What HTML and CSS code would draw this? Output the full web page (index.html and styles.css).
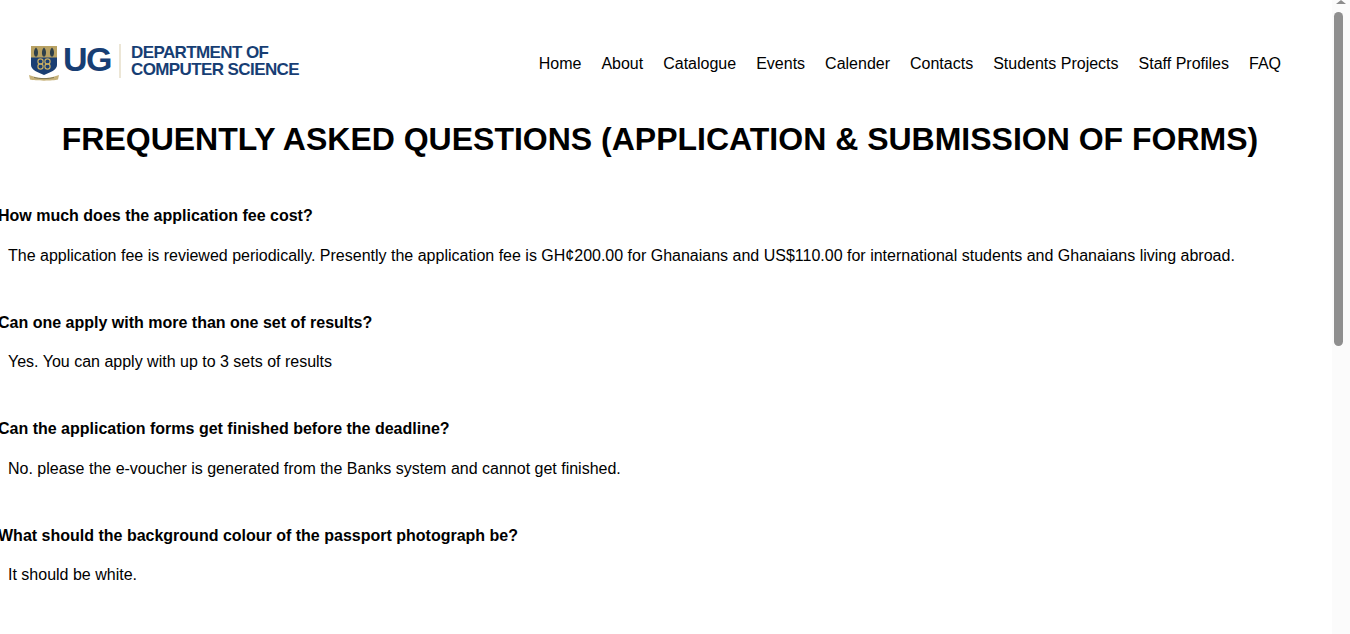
FILE: index.html
```html
<!DOCTYPE html>
<html lang="en">
<head>
    <meta charset="UTF-8">
    <meta name="viewport" content="width=device-width, initial-scale=1.0">
    <title>FAQ - Department of Computer Science</title>
    <link rel="stylesheet" href="styles.css">
</head>
<body>
    <div class="page">
        <header class="site-header">
            <a class="logo" href="#">
                <svg class="crest" width="30" height="36" viewBox="0 0 30 36" aria-hidden="true">
                    <path d="M2 1H28V20C28 25 21 27.500 15 30C9 27.500 2 25 2 20Z" fill="#1b3f73"/>
                    <path d="M2 1H28V12.500H2Z" fill="#b9a263"/>
                    <path d="M7 2.500C9.500 5 9.500 9 8 11.500H6C4.500 9 4.500 5 7 2.500ZM15 2.500C17.500 5 17.500 9 16 11.500H14C12.500 9 12.500 5 15 2.500ZM23 2.500C25.500 5 25.500 9 24 11.500H22C20.500 9 20.500 5 23 2.500Z" fill="#2d3f4a"/>
                    <g fill="none" stroke="#c9ae62" stroke-width="1.200">
                        <circle cx="11.500" cy="16.500" r="2.600"/>
                        <circle cx="18.500" cy="16.500" r="2.600"/>
                        <circle cx="11.500" cy="21.500" r="2.600"/>
                        <circle cx="18.500" cy="21.500" r="2.600"/>
                    </g>
                    <path d="M0 30C4 31.500 8 33 15 33C22 33 26 31.500 30 30L29 34.500C24 36 6 36 1 34.500Z" fill="#c7b27a"/>
                    <path d="M5 32.500C10 34 20 34 25 32.500" fill="none" stroke="#6f6a4a" stroke-width="0.800"/>
                </svg>
                <span class="logo-ug">UG</span>
                <span class="logo-rule"></span>
                <span class="logo-dept">DEPARTMENT OF<br>COMPUTER SCIENCE</span>
            </a>
            <nav class="main-nav">
                <a href="#">Home</a>
                <a href="#">About</a>
                <a href="#">Catalogue</a>
                <a href="#">Events</a>
                <a href="#">Calender</a>
                <a href="#">Contacts</a>
                <a href="#">Students Projects</a>
                <a href="#">Staff Profiles</a>
                <a href="#">FAQ</a>
            </nav>
        </header>

        <h1>FREQUENTLY ASKED QUESTIONS (APPLICATION &amp; SUBMISSION OF FORMS)</h1>

        <div class="faq-item">
            <h3>How much does the application fee cost?</h3>
            <p>The application fee is reviewed periodically. Presently the application fee is GH¢200.00 for Ghanaians and US$110.00 for international students and Ghanaians living abroad.</p>
        </div>
        <div class="faq-item">
            <h3>Can one apply with more than one set of results?</h3>
            <p>Yes. You can apply with up to 3 sets of results</p>
        </div>
        <div class="faq-item">
            <h3>Can the application forms get finished before the deadline?</h3>
            <p>No. please the e-voucher is generated from the Banks system and cannot get finished.</p>
        </div>
        <div class="faq-item">
            <h3>What should the background colour of the passport photograph be?</h3>
            <p>It should be white.</p>
        </div>
    </div>

    <!-- scrollbar as it shows in the window -->
    <div class="scrollbar">
        <span class="scroll-arrow"></span>
        <span class="scroll-thumb"></span>
    </div>
</body>
</html>
```

FILE: styles.css
```css
html, body {
    height: 100%;
    overflow: hidden;
}

body {
    font-family: "Liberation Sans", Arial, sans-serif;
    font-size: 16px;
    line-height: 24px;
    background-color: #fff;
    color: #000;
    margin: 0;
}

.page {
    width: 1332px;
}

.site-header {
    display: flex;
    justify-content: space-between;
    align-items: center;
    height: 48px;
    padding: 40px 51px 0 29px;
}

.logo {
    display: flex;
    align-items: center;
    color: #173e74;
    text-decoration: none;
}

.crest {
    display: block;
    margin: 0 4px 2px 0;
}

.logo-ug {
    font-size: 34px;
    line-height: 36px;
    font-weight: bold;
    letter-spacing: -1.5px;
    margin-bottom: 11px;
}

.logo-rule {
    width: 2px;
    height: 34px;
    margin: 0 10px 6px 8px;
    background-color: #ece6d6;
}

.logo-dept {
    font-size: 17px;
    line-height: 17px;
    font-weight: bold;
    letter-spacing: -0.6px;
    margin-bottom: 7px;
}

.main-nav {
    display: flex;
    gap: 20px;
}

.main-nav a {
    color: #000;
    text-decoration: none;
}

h1 {
    margin: 32px 12px 46px 0;
    font-size: 32px;
    line-height: 38px;
    text-align: center;
}

.faq-item {
    height: 106.6px;
}

.faq-item h3 {
    margin: 0 0 15.6px -2px;
    font-size: 16px;
    line-height: 24px;
}

.faq-item p {
    margin: 0;
    padding-left: 8px;
}

.scrollbar {
    position: absolute;
    top: 0;
    right: 0;
    bottom: 0;
    width: 18px;
    background-color: #fbfbfb;
}

.scroll-arrow {
    position: absolute;
    top: 0;
    left: 4px;
    border-left: 5px solid transparent;
    border-right: 5px solid transparent;
    border-bottom: 4px solid #8c8c8c;
}

.scroll-thumb {
    position: absolute;
    top: 12px;
    left: 2px;
    width: 9px;
    height: 334px;
    border-radius: 5px;
    background-color: #8f8f8f;
}
```
